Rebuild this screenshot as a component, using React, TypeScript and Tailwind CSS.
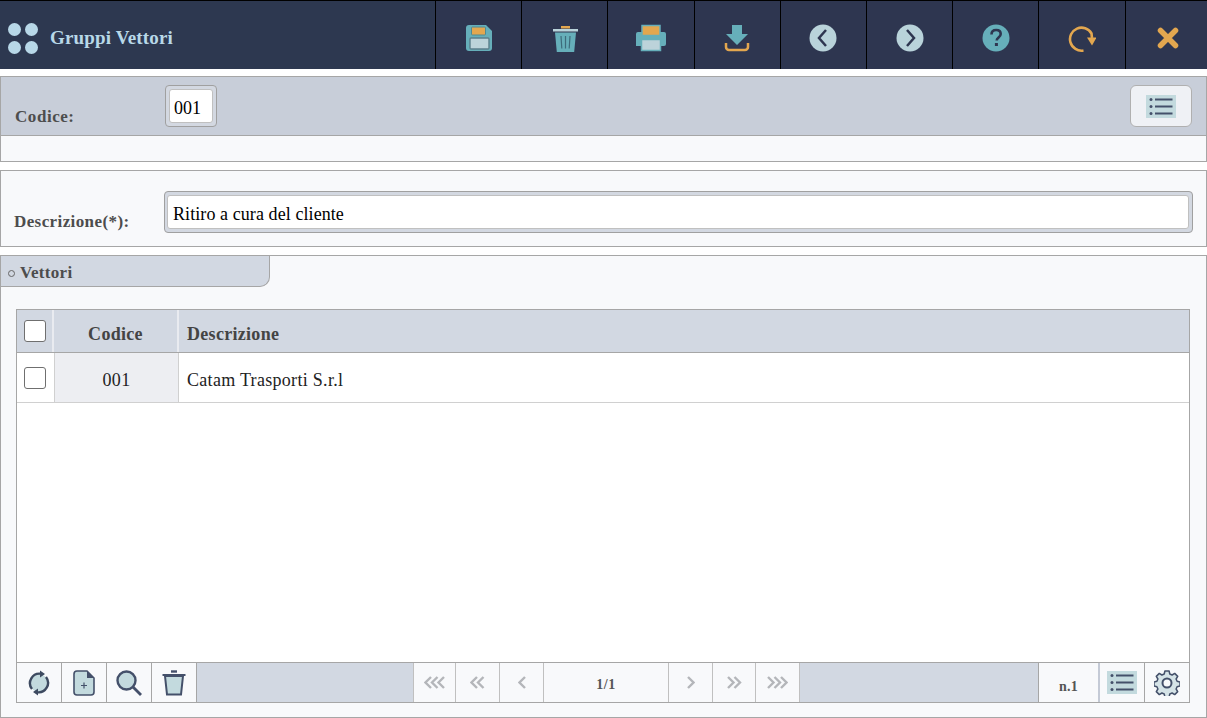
import { ReactElement } from 'react';

const FloppyIcon = () => (
  <svg width="28" height="28" viewBox="0 0 28 28">
    <path d="M4 1h17l6 6v17a3 3 0 0 1-3 3H4a3 3 0 0 1-3-3V4a3 3 0 0 1 3-3z" fill="#66afba" />
    <rect x="6.500" y="3" width="14" height="8" rx="1" fill="#e3a74f" stroke="#4f8a94" strokeWidth="1" />
    <rect x="5" y="14" width="19" height="11" rx="1" fill="#bcd3da" stroke="#5b7f8c" strokeWidth="1.400" />
  </svg>
);

const TrashIcon = () => (
  <svg width="28" height="28" viewBox="0 0 28 28">
    <rect x="10" y="2" width="9" height="2.500" fill="#e3a74f" />
    <rect x="2" y="5" width="25" height="2.500" fill="#b9d3da" />
    <path d="M4 8.500h21l-1.800 19.500H5.800z" fill="#66afba" />
    <path d="M10 12l.8 12.500M14.500 12v12.500M19 12l-.8 12.500" stroke="#3d6b7b" strokeWidth="1.200" />
  </svg>
);

const PrintIcon = () => (
  <svg width="32" height="28" viewBox="0 0 32 28">
    <path d="M3 8h26a2 2 0 0 1 2 2v10a2 2 0 0 1-2 2H1V10a2 2 0 0 1 2-2z" fill="#66afba" />
    <rect x="7" y="1.500" width="18" height="10" fill="#e3a74f" stroke="#66afba" strokeWidth="1.500" />
    <rect x="6.500" y="15.500" width="19" height="11" fill="#bcd3da" stroke="#66afba" strokeWidth="1.500" />
  </svg>
);

const DownloadIcon = () => (
  <svg width="26" height="28" viewBox="0 0 26 28">
    <path d="M8 1h10v9h6L13 21 2 10h6z" fill="#66afba" />
    <path d="M2 19v4a3 3 0 0 0 3 3h16a3 3 0 0 0 3-3v-4" fill="none" stroke="#e3a74f" strokeWidth="2.500" />
  </svg>
);

const CircleArrow = ({ dir }: { dir: 'left' | 'right' | 'help' }) => (
  <svg width="28" height="28" viewBox="0 0 28 28">
    <circle cx="14" cy="14" r="13.500" fill={dir === 'help' ? '#66afba' : '#b9d3da'} />
    {dir === 'left' && <path d="M17 6l-7 8 7 8" fill="none" stroke="#2e3650" strokeWidth="2.500" />}
    {dir === 'right' && <path d="M11 6l7 8-7 8" fill="none" stroke="#2e3650" strokeWidth="2.500" />}
    {dir === 'help' && (
      <>
        <path d="M9.500 10.500c0-3 2-4.500 4.700-4.500s4.500 1.600 4.500 4c0 3.400-4 3.600-4 6.500" fill="none" stroke="#2e3650" strokeWidth="2.600" />
        <rect x="12.900" y="19" width="3" height="3" fill="#2e3650" />
      </>
    )}
  </svg>
);

const RedoIcon = () => (
  <svg width="28" height="28" viewBox="0 0 28 28">
    <path d="M15.500 26.500A11.500 11.500 0 1 1 23.500 9.500L24 14" fill="none" stroke="#e3a74f" strokeWidth="2.600" />
    <path d="M19 13.500h9.500L24 21.500z" fill="#e3a74f" />
  </svg>
);

const CloseIcon = () => (
  <svg width="22" height="22" viewBox="0 0 22 22">
    <path d="M3.500 3.500l15 15M18.500 3.500l-15 15" stroke="#e3a74f" strokeWidth="5.500" strokeLinecap="round" />
  </svg>
);

const ListIcon = () => (
  <svg width="30" height="23" viewBox="0 0 30 23">
    <rect width="30" height="23" fill="#c3dade" />
    <path d="M9 4.500h17.500M9 11.500h17.500M9 18.500h17.500" stroke="#44506a" strokeWidth="2" />
    <circle cx="5" cy="4.500" r="1.500" fill="#44506a" />
    <circle cx="5" cy="11.500" r="1.500" fill="#44506a" />
    <circle cx="5" cy="18.500" r="1.500" fill="#44506a" />
  </svg>
);

const SyncIcon = () => (
  <svg width="22" height="26" viewBox="0 0 22 26">
    <circle cx="11" cy="13" r="9" fill="#c3dade" />
    <path d="M4 19A9.500 9.500 0 0 1 13 3.800M18 7A9.500 9.500 0 0 1 9 22.200" fill="none" stroke="#3d4a60" strokeWidth="2.400" />
    <path d="M12 0.500l5 3.500-5 3.500zM10 18.500l-5 3.500 5 3.500z" fill="#3d4a60" />
  </svg>
);

const NewDocIcon = () => (
  <svg width="22" height="26" viewBox="0 0 22 26">
    <path d="M4 1h10l7 7v14a3 3 0 0 1-3 3H4a3 3 0 0 1-3-3V4a3 3 0 0 1 3-3z" fill="#c3dade" stroke="#44506a" strokeWidth="1.600" />
    <path d="M14 1v7h7z" fill="#44506a" />
    <path d="M8 15.500h6M11 12.500v6" stroke="#44506a" strokeWidth="1.200" />
  </svg>
);

const SearchIcon = () => (
  <svg width="26" height="26" viewBox="0 0 26 26">
    <circle cx="10.500" cy="10.500" r="9" fill="#c3dade" stroke="#44506a" strokeWidth="2.400" />
    <path d="M17 17l8 8" stroke="#44506a" strokeWidth="2.800" />
  </svg>
);

const BinIcon = () => (
  <svg width="24" height="26" viewBox="0 0 24 26">
    <path d="M3 6h18l-2 18.500H5z" fill="#c3dade" stroke="#44506a" strokeWidth="2" />
    <path d="M0.500 5h23" stroke="#44506a" strokeWidth="2" />
    <path d="M9 1.500h6" stroke="#44506a" strokeWidth="2.400" />
  </svg>
);

const GearIcon = () => (
  <svg width="26" height="26" viewBox="0 0 26 26" stroke="#44506a">
    <path
      d="M10.900 1h4.200l.7 3 2.300 1 2.600-1.600 3 3-1.600 2.600 1 2.300 2.900.7v4l-2.900.7-1 2.300 1.600 2.600-3 3-2.600-1.600-2.300 1-.7 3h-4.200l-.7-3-2.300-1-2.600 1.600-3-3 1.600-2.600-1-2.300-2.900-.7v-4l2.900-.7 1-2.300-1.600-2.600 3-3 2.600 1.600 2.300-1z"
      fill="#d5e3e7"
      strokeWidth="1.500"
      strokeLinejoin="round"
    />
    <circle cx="13" cy="13" r="4.500" fill="#f8f9fb" strokeWidth="2" />
  </svg>
);

const Chevrons = ({ count, dir }: { count: number; dir: 'left' | 'right' }) => {
  const w = count === 3 ? 21 : count === 2 ? 15 : 8;
  return (
    <svg width={w} height="13" viewBox={`0 0 ${w} 13`} fill="none" stroke="#b4b6ba" strokeWidth="2.400">
      {Array.from({ length: count }).map((_, i) => (
        <path
          key={i}
          d={
            dir === 'left'
              ? `M${7 + i * 6.5} 1L${1.5 + i * 6.5} 6.500L${7 + i * 6.5} 12`
              : `M${1 + i * 6.5} 1L${6.5 + i * 6.5} 6.500L${1 + i * 6.5} 12`
          }
        />
      ))}
    </svg>
  );
};

const headerIcons: ReactElement[] = [
  <FloppyIcon key="save" />,
  <TrashIcon key="trash" />,
  <PrintIcon key="print" />,
  <DownloadIcon key="download" />,
  <CircleArrow key="prev" dir="left" />,
  <CircleArrow key="next" dir="right" />,
  <CircleArrow key="help" dir="help" />,
  <RedoIcon key="redo" />,
  <CloseIcon key="close" />,
];

const Checkbox = () => <div className="w-[22px] h-[22px] bg-white border border-[#6f6f6f] rounded-[3px]" />;

export default function App() {
  return (
    <div className="w-[1207px] h-[718px] bg-white overflow-hidden flex flex-col font-['Liberation_Serif',serif]">
      <header className="h-[69px] border-t border-black bg-[#2d3850] flex shrink-0 overflow-hidden">
        <div className="w-[435px] shrink-0 flex items-center pl-2 pt-[6px]">
          <div className="grid grid-cols-2 gap-x-[4px] gap-y-[5px] w-[30px]">
            <span className="w-[13px] h-[13px] rounded-full bg-[#b8d8e8]" />
            <span className="w-[13px] h-[13px] rounded-full bg-[#b8d8e8]" />
            <span className="w-[13px] h-[13px] rounded-full bg-[#b8d8e8]" />
            <span className="w-[13px] h-[13px] rounded-full bg-[#b8d8e8]" />
          </div>
          <span className="ml-[12px] font-bold text-[19px] tracking-[0.15px] text-[#b8d8e8]">Gruppi Vettori</span>
        </div>
        <div className="grid grid-cols-[repeat(9,86.2px)] shrink-0 bg-[#2e3650]">
          {headerIcons.map((icon) => (
            <div key={icon.key} className="border-l border-black flex items-center justify-center pt-[6px]">
              {icon}
            </div>
          ))}
        </div>
      </header>

      <section className="mt-[7px] h-[86px] border border-[#a6a6a6] bg-[#f8f9fb] shrink-0">
        <div className="h-[59px] bg-[#c8ced9] border-b border-[#a6a6a6] flex items-start">
          <span className="w-[164px] pl-[14px] pt-[30px] font-bold text-[17px] leading-[20px] tracking-[0.55px] text-[#4d4d4d]">Codice:</span>
          <div className="mt-[8px] w-[52px] h-[42px] border border-[#a0a0a0] rounded-[4px] bg-[#d3d8e1] p-[3px]">
            <div className="h-full bg-white border border-[#c0c0c0] rounded-[3px] pl-[4px] text-[18px] leading-[36px] text-black">001</div>
          </div>
          <button className="ml-auto mr-[14px] mt-[8px] w-[62px] h-[42px] bg-[#eff1f5] border border-[#b0b0b0] rounded-[6px] flex items-center justify-center">
            <ListIcon />
          </button>
        </div>
      </section>

      <section className="mt-[8px] h-[77px] border border-[#a6a6a6] bg-[#f8f9fb] flex shrink-0">
        <span className="w-[163px] pl-[13px] pt-[41px] font-bold text-[17px] leading-[20px] tracking-[0.4px] text-[#4d4d4d]">Descrizione(*):</span>
        <div className="mt-[20px] w-[1029px] h-[42px] border border-[#a0a0a0] rounded-[4px] bg-[#d3d8e1] pl-[2px] pr-[3px] py-[3px]">
          <div className="h-full bg-white border border-[#c0c0c0] rounded-[3px] pl-[5px] text-[18px] leading-[36px] tracking-[0.08px] text-black">Ritiro a cura del cliente</div>
        </div>
      </section>

      <section className="mt-[8px] h-[463px] border border-[#a6a6a6] bg-[#f8f9fb] flex flex-col shrink-0">
        <div className="w-[269px] h-[31px] bg-[#d2d8e2] border-r border-b border-[#a6a6a6] rounded-br-[10px] flex items-center pl-[7px] pt-[4px] font-bold text-[17px] tracking-[0.3px] text-[#4d4d4d] shrink-0">
          <span className="w-[7px] h-[7px] rounded-full border border-[#666] mr-[5px]" />
          Vettori
        </div>

        <div className="ml-[15px] mr-[16px] mt-[22px] h-[394px] border-t border-x border-[#a6a6a6] bg-white flex flex-col">
          <div className="h-[43px] flex bg-[#d2d8e2] border-b border-[#a6a6a6] shrink-0 font-bold text-[18px] tracking-[0.3px] text-[#444]">
            <div className="w-[37px] flex items-center pl-[7px] border-r-2 border-[#e9ebf0]">
              <Checkbox />
            </div>
            <div className="w-[125px] flex items-center justify-center border-r-2 border-[#e9ebf0] pt-[7px]">Codice</div>
            <div className="flex-1 flex items-center pl-[8px] pt-[7px]">Descrizione</div>
          </div>
          <div className="h-[50px] flex border-b border-[#d0d0d0] shrink-0 text-[18px] tracking-[0.3px] text-[#222]">
            <div className="w-[37px] flex items-center pl-[7px]">
              <Checkbox />
            </div>
            <div className="w-[125px] flex items-center justify-center bg-[#edeef2] border-x border-[#d0d0d0] pt-[6px]">001</div>
            <div className="flex-1 flex items-center pl-[8px] pt-[6px]">Catam Trasporti S.r.l</div>
          </div>
          <div className="flex-1" />

          <div className="h-[41px] flex border-y border-[#a6a6a6] bg-[#f8f9fb] shrink-0">
            <div className="w-[45px] flex items-center justify-center border-r border-[#a6a6a6]"><SyncIcon /></div>
            <div className="w-[45px] flex items-center justify-center border-r border-[#a6a6a6]"><NewDocIcon /></div>
            <div className="w-[45px] flex items-center justify-center border-r border-[#a6a6a6]"><SearchIcon /></div>
            <div className="w-[45px] flex items-center justify-center border-r border-[#a6a6a6]"><BinIcon /></div>
            <div className="w-[216px] bg-[#d2d8e2]" />
            <div className="w-[43px] flex items-center justify-center border-x border-[#c0c0c0]"><Chevrons count={3} dir="left" /></div>
            <div className="w-[44px] flex items-center justify-center border-r border-[#c0c0c0]"><Chevrons count={2} dir="left" /></div>
            <div className="w-[44px] flex items-center justify-center border-r border-[#c0c0c0]"><Chevrons count={1} dir="left" /></div>
            <div className="w-[125px] flex items-center justify-center border-r border-[#c0c0c0] font-bold text-[14px] tracking-[0.5px] text-[#555] pt-[3px]">1/1</div>
            <div className="w-[44px] flex items-center justify-center border-r border-[#c0c0c0]"><Chevrons count={1} dir="right" /></div>
            <div className="w-[43px] flex items-center justify-center border-r border-[#c0c0c0]"><Chevrons count={2} dir="right" /></div>
            <div className="w-[44px] flex items-center justify-center border-r border-[#c0c0c0]"><Chevrons count={3} dir="right" /></div>
            <div className="w-[239px] bg-[#d2d8e2] border-r border-[#a6a6a6]" />
            <div className="w-[59px] flex items-center justify-center font-bold text-[14px] tracking-[0.3px] text-[#555] pt-[7px]">n.1</div>
            <div className="w-[47px] flex items-center justify-center border-l-2 border-l-[#c4cad6] border-r border-r-[#a6a6a6]"><ListIcon /></div>
            <div className="flex-1 flex items-center justify-center"><GearIcon /></div>
          </div>
        </div>
      </section>
    </div>
  );
}
